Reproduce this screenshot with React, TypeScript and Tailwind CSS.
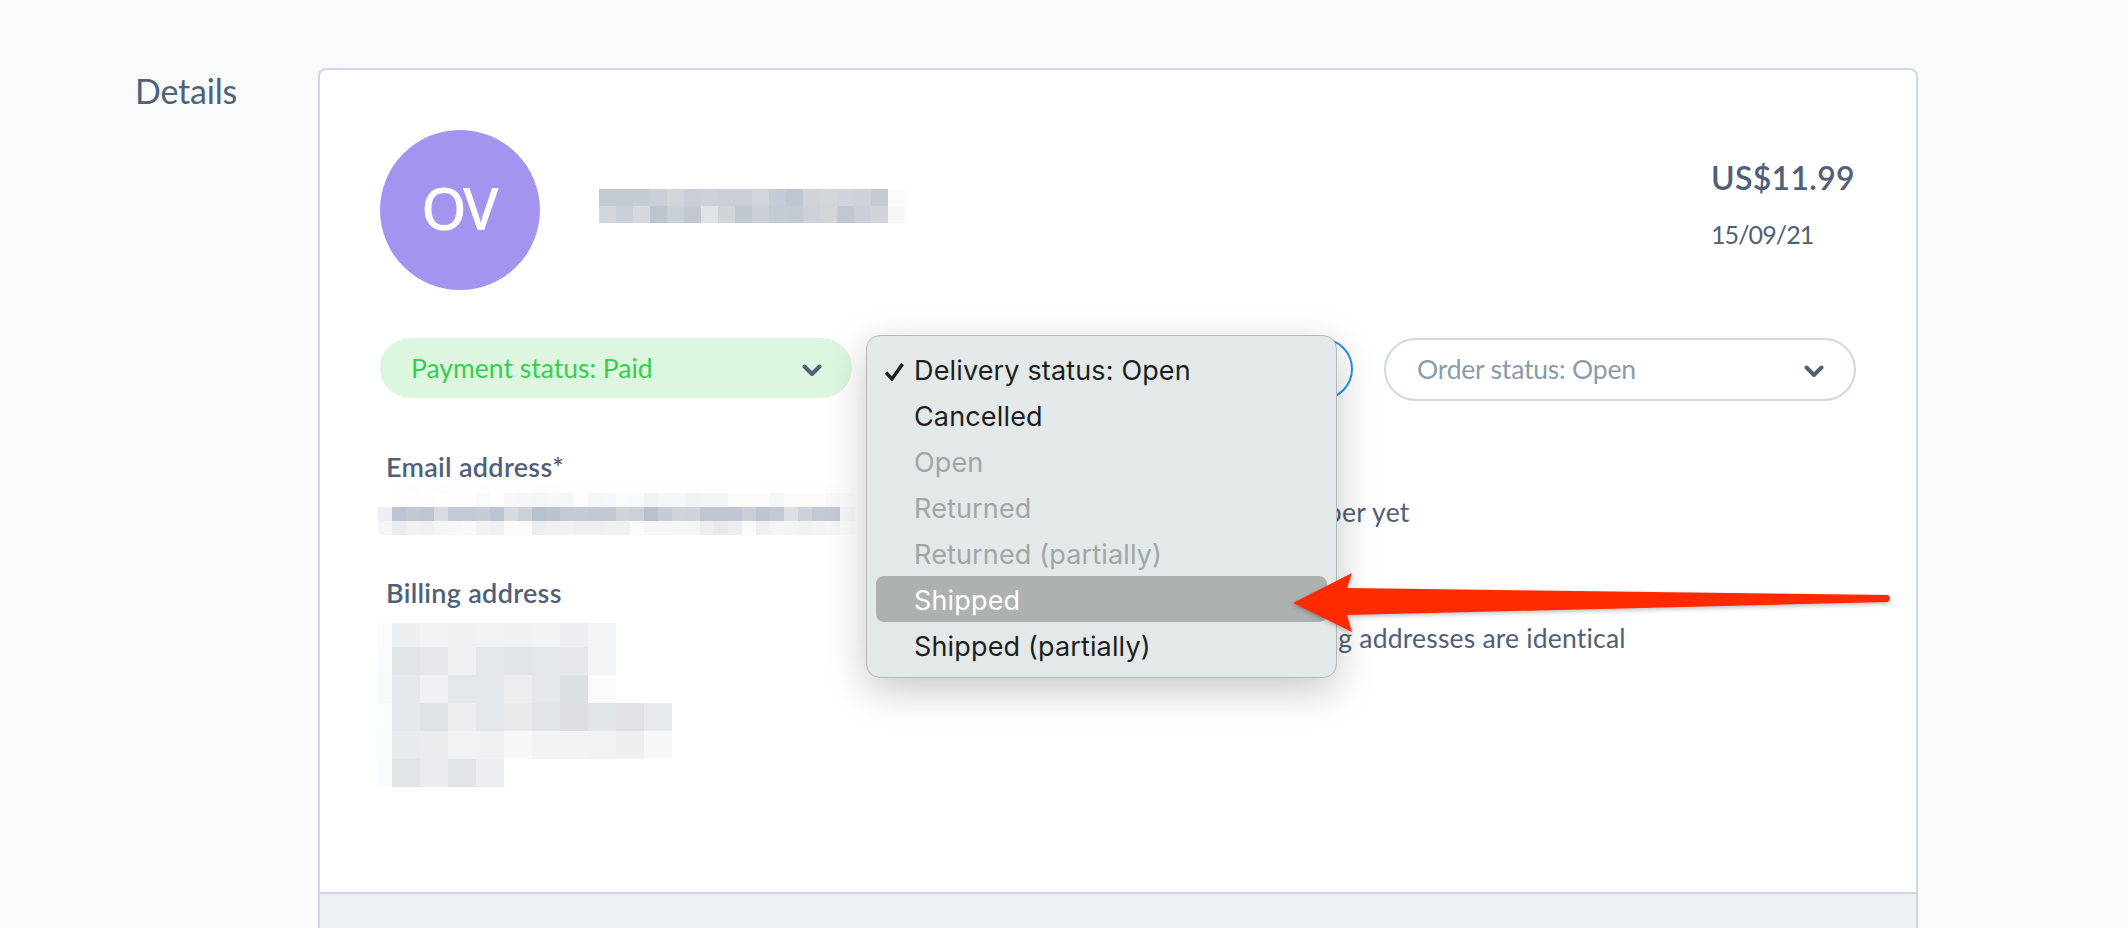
const nameRows = [
  ["#c3cad3", "#c5cbd4", "#c5ccd5", "#cbd0d8", "#d2d6db", "#c8cdd6", "#cdd2da", "#c9ced7", "#cbd0d8", "#d2d6da", "#c5ccd5", "#bfc6d0", "#d0d4da", "#d3d7dc", "#d1d5db", "#cdd1d9", "#c4cad4", "#fafafa"],
  ["#d3d6db", "#cbcfd7", "#d5d8dc", "#bec5ce", "#cad0d8", "#c2c8d2", "#dfe2e6", "#d0d4d9", "#c1c7d1", "#cbd0d8", "#c5cbd4", "#c4cad3", "#cdd1d9", "#d2d6da", "#c2c8d1", "#cbd0d8", "#d0d4d9", "#f7f7f8"],
]

const emailRows = [
  ["#ffffff", "#fdfdfe", "#fcfcfd", "#fdfdfe", "#fcfcfd", "#fdfdfe", "#fdfdfe", "#fcfcfd", "#fdfdfe", "#fefefe", "#fdfdfe", "#fcfcfd", "#fcfcfd", "#fefefe", "#fefefe", "#fefefe", "#fefefe", "#fefefe", "#fefefe", "#fefefe", "#fefefe", "#fefefe", "#fefefe", "#fefefe", "#fefefe", "#fefefe", "#fefefe", "#fefefe", "#fefefe", "#fefefe", "#fefefe", "#fefefe", "#fefefe", "#ffffff"],
  ["#ffffff", "#fdfdfe", "#fdfdfe", "#fdfdfe", "#fefefe", "#fdfdfe", "#fdfdfe", "#f9fafb", "#fdfdfe", "#f8f8f9", "#f7f7f9", "#f4f5f7", "#f6f7f8", "#f5f6f8", "#fdfdfe", "#f5f6f8", "#f6f7f8", "#fafafb", "#f8f9fa", "#f1f2f4", "#f5f6f7", "#f5f6f7", "#f1f2f4", "#f3f4f6", "#f3f4f5", "#fbfbfc", "#fbfbfc", "#fbfbfc", "#f5f6f7", "#fbfbfc", "#fbfbfc", "#fbfbfc", "#f9f9fa", "#fcfcfc"],
  ["#eeeff2", "#bcc4cf", "#c1c8d2", "#bfc6d1", "#d8dce2", "#c3cad4", "#c3cad4", "#c6ccd6", "#bcc4cf", "#d7dbe1", "#cdd2da", "#b9c1cc", "#bbc3ce", "#c4cad4", "#c3cad3", "#c1c8d2", "#c1c8d2", "#d0d5dc", "#cdd2da", "#b9c1cc", "#c5ccd5", "#d0d5dc", "#cfd3db", "#bfc6d0", "#bfc6d0", "#bfc6d0", "#c9ced7", "#bec5cf", "#c2c9d2", "#dcdfe5", "#cdd2da", "#c3c9d3", "#c3c9d3", "#f8f8fa"],
  ["#f6f6f8", "#e9ebee", "#f1f2f4", "#eff0f2", "#f4f5f6", "#f6f7f8", "#f8f9fa", "#f1f2f4", "#eff0f3", "#fbfbfc", "#fbfbfc", "#ebeef1", "#eff0f2", "#f1f2f4", "#eeeff2", "#eeeff2", "#eff0f2", "#eff0f2", "#fbfbfc", "#f5f6f7", "#f5f6f7", "#f4f5f7", "#f4f5f7", "#ebedf0", "#e6e8ec", "#ebedf0", "#f9fafb", "#eeeff2", "#f4f5f6", "#f3f4f6", "#f1f2f4", "#f3f4f6", "#f6f6f8", "#fcfcfc"],
]

const billingRows = [
  ["#fbfbfb", "#eeeff1", "#f2f3f5", "#eff0f2", "#f1f2f4", "#f0f1f3", "#f2f3f5", "#edeef1", "#f3f4f6"],
  ["#f9fafb", "#e2e5e8", "#e6e7ea", "#eff0f2", "#e4e7ea", "#e2e5e8", "#e4e7ea", "#e7e8eb", "#f3f4f6"],
  ["#f8f9f9", "#e5e8ea", "#f0f1f4", "#e4e7ea", "#e5e8ea", "#eceef0", "#e5e8ea", "#dcdfe3", "#fbfbfb"],
  ["#fbfcfc", "#e5e8ea", "#dfe2e5", "#eceef0", "#e4e7ea", "#e8eaec", "#e3e6e9", "#dcdee2", "#e3e6e8", "#dfe1e5", "#e8ebed"],
  ["#fafbfc", "#e8ebed", "#ebecee", "#f1f2f4", "#f0f1f2", "#f7f8f9", "#f2f3f5", "#f2f3f5", "#f1f2f3", "#eeeff1", "#f7f8f9"],
  ["#f9fafb", "#e3e6e9", "#ebecef", "#e2e5e8", "#edeef1"],
]

const menuItems = [
  { label: "Delivery status: Open", checked: true },
  { label: "Cancelled" },
  { label: "Open", disabled: true },
  { label: "Returned", disabled: true },
  { label: "Returned (partially)", disabled: true },
  { label: "Shipped", active: true },
  { label: "Shipped (partially)" },
]

function Mosaic({ rows, size, height, firstWidth }: { rows: string[][]; size: number; height: number[]; firstWidth: number }) {
  return (
    <div className="flex flex-col">
      {rows.map((row, r) => (
        <div key={r} className="flex" style={{ height: height[r] }}>
          {row.map((color, c) => (
            <div key={c} style={{ width: c === 0 ? firstWidth : size, background: color }} />
          ))}
        </div>
      ))}
    </div>
  )
}

function Chevron() {
  return (
    <svg width="20" height="13" viewBox="0 0 20 13" fill="none" className="mt-[3px] shrink-0">
      <path d="M2.5 2.5L10 10L17.5 2.5" stroke="#4f6078" strokeWidth="4" strokeLinecap="round" strokeLinejoin="round" />
    </svg>
  )
}

export default function App() {
  return (
    <div className="relative flex h-[928px] overflow-hidden bg-[#f9fafc] font-[Lato,sans-serif] text-[#4f6078]">
      <div className="w-[318px] shrink-0 pl-[135px] pt-[71px] text-[34px] leading-[40px] tracking-[-0.2px]">Details</div>

      <div className="mt-[68px] flex h-[1000px] w-[1600px] shrink-0 flex-col rounded-t-[8px] border-2 border-[#cfd8e0] bg-white">
        <div className="h-[822px] shrink-0 pl-[60px] pr-[58px] pt-[60px]">
          {/* Header */}
          <div className="flex h-[160px] items-start">
            <div className="flex h-[160px] w-[160px] items-center justify-center rounded-full bg-[#a594ef] pb-[6px] pr-[3px] font-['Noto_Sans',sans-serif] text-[58px] font-medium tracking-[-3px] text-white">
              OV
            </div>
            <div className="ml-[59px] mt-[59px]">
              <Mosaic rows={nameRows} size={17} height={[17, 17]} firstWidth={17} />
            </div>
            <div className="ml-auto mr-[5px] w-[142px] pt-[28px]">
              <div className="text-[32px] font-semibold leading-[40px] tracking-[0.3px]">US$11.99</div>
              <div className="mt-[18px] text-[25px] leading-[36px] tracking-[-0.9px]">15/09/21</div>
            </div>
          </div>

          {/* Status selects */}
          <div className="mt-[48px] flex items-start gap-[31px]">
            <div className="flex h-[60px] w-[472px] items-center justify-between rounded-full bg-[#dcf6e0] pl-[31px] pr-[30px] pt-[2px] text-[26.5px] text-[#35cf4e]">
              Payment status: Paid
              <Chevron />
            </div>
            <div className="h-[62px] w-[470px] rounded-full border-2 border-[#1f95f0] bg-white" />
            <div className="flex h-[63px] w-[472px] items-center justify-between rounded-full border-2 border-[#cfd8e0] pl-[31px] pr-[30px] text-[26.5px] tracking-[-0.2px] text-[#8a9bb0]">
              Order status: Open
              <Chevron />
            </div>
          </div>

          {/* Contact and addresses */}
          <div className="-ml-[2px] mt-[50px] grid grid-cols-[746px_1fr]">
            <div className="h-[126px]">
              <div className="pl-[8px] text-[27px] font-semibold leading-[32px] tracking-[0.3px]">Email address*</div>
              <div className="mt-[1px]">
                <Mosaic rows={emailRows} size={14} height={[9, 14, 14, 14]} firstWidth={14} />
              </div>
            </div>
            <div>
              <div className="text-[27px] font-semibold leading-[32px]">Phone number</div>
              <div className="mt-[13px] pl-[26px] text-[26.5px] leading-[32px] tracking-[0.3px]">No phone number yet</div>
            </div>
            <div>
              <div className="pl-[8px] text-[27px] font-semibold leading-[32px] tracking-[0.3px]">Billing address</div>
              <div className="mt-[14px]">
                <Mosaic rows={billingRows} size={28} height={[24, 28, 28, 28, 28, 28]} firstWidth={14} />
              </div>
            </div>
            <div>
              <div className="text-[27px] font-semibold leading-[32px]">Shipping address</div>
              <div className="mt-[13px] text-[26.5px] leading-[32px] tracking-[0.2px]">Billing and shipping addresses are identical</div>
            </div>
          </div>
        </div>
        <div className="flex-1 border-t-2 border-[#cfd8e0] bg-[#edf1f4]" />
      </div>

      {/* Native select popup */}
      <div className="absolute left-[866px] top-[335px] h-[343px] w-[471px] rounded-[14px] border border-[#b4b9bb] bg-[#e3e8e8] px-[9px] py-[10px] font-[Inter,sans-serif] text-[27px] tracking-[0.15px] text-[#1c1e20] shadow-[0_12px_40px_rgba(0,0,0,0.22)]">
        {menuItems.map((item) => (
          <div
            key={item.label}
            className={`relative flex h-[46px] items-center rounded-[8px] pl-[38px] pt-[5px] ${item.active ? "bg-[#adb2b1] text-white" : ""} ${item.disabled ? "text-[#a1a6a7]" : ""}`}
          >
            {item.checked && (
              <svg width="21" height="19" viewBox="0 0 21 19" className="absolute left-[8px] top-[16px]" fill="none">
                <path d="M2 10.5L8 17L18.5 2" stroke="#1c1e20" strokeWidth="3.4" />
              </svg>
            )}
            {item.label}
          </div>
        ))}
      </div>

      {/* Annotation arrow */}
      <svg width="604" height="66" viewBox="0 0 604 66" className="absolute left-[1290px] top-[570px] drop-shadow-[0_2px_2px_rgba(0,0,0,0.25)]">
        <path d="M3 33L62 3L57 18L598 25Q602 28 598 32L57 45L62 62Z" fill="#ff2a00" />
      </svg>
    </div>
  )
}
